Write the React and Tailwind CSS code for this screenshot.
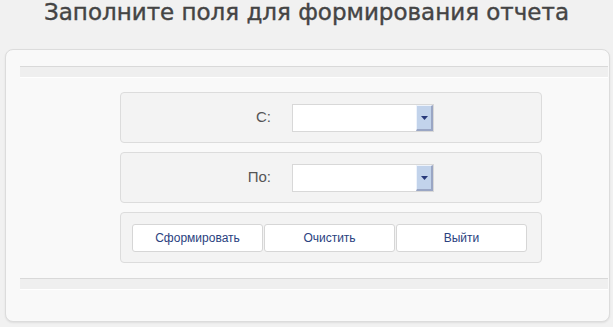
import React from "react";

function Select() {
  return (
    <div className="w-[142px] h-[28px] border border-[#d8d8d8] bg-white flex justify-end">
      <div className="w-[17px] h-full bg-[#c2d3eb] border-l border-t border-l-[#eef3fb] border-t-[#eef3fb] border-r-2 border-b-2 border-r-[#9aa6c4] border-b-[#9aa6c4] flex items-center justify-center">
        <svg width="7" height="4" viewBox="0 0 7 4" className="mt-[2px]">
          <polygon points="0,0 7,0 3.5,4" fill="#28397a" />
        </svg>
      </div>
    </div>
  );
}

function FieldRow({ label }) {
  return (
    <div className="h-[51px] border border-[#dcdcdc] rounded-[4px] bg-[#f3f3f3] flex items-center">
      <div className="w-[150px] text-right text-[15px] text-[#555]">{label}</div>
      <div className="ml-[21px]">
        <Select />
      </div>
    </div>
  );
}

function Strip() {
  return <div className="h-[12px] border-t border-t-[#d9d9d9] border-b border-b-white bg-[#efefef]" />;
}

export default function App() {
  const buttons = ["Сформировать", "Очистить", "Выйти"];

  return (
    <div className="w-[613px] h-[327px] bg-[#f1f1f1] overflow-hidden font-['Liberation_Sans',Arial,sans-serif]">
      <h1 className="text-center text-[23px] leading-[25px] text-[#444] font-['DejaVu_Sans',sans-serif] [-webkit-text-stroke:0.4px_#444]">
        Заполните поля для формирования отчета
      </h1>

      <div className="ml-[5px] mr-[3px] mt-[24px] border border-[#dcdcdc] rounded-[8px] bg-[#f9f9f9] shadow-[0_1px_2px_rgba(0,0,0,0.08)] pl-[14px] pr-[1px] pt-[16px] pb-[31px]">
        <Strip />

        <div className="ml-[100px] mt-[14px] w-[422px] flex flex-col gap-[9px]">
          <FieldRow label="С:" />
          <FieldRow label="По:" />
          <div className="h-[51px] border border-[#dcdcdc] rounded-[4px] bg-[#f3f3f3] flex items-center pl-[11px] gap-[1px]">
            {buttons.map((b) => (
              <button
                key={b}
                className="w-[131px] h-[28px] border border-[#d6d6d6] rounded-[3px] bg-white text-[12px] text-[#2a4180]"
              >
                {b}
              </button>
            ))}
          </div>
        </div>

        <div className="mt-[15px]">
          <Strip />
        </div>
      </div>
    </div>
  );
}
